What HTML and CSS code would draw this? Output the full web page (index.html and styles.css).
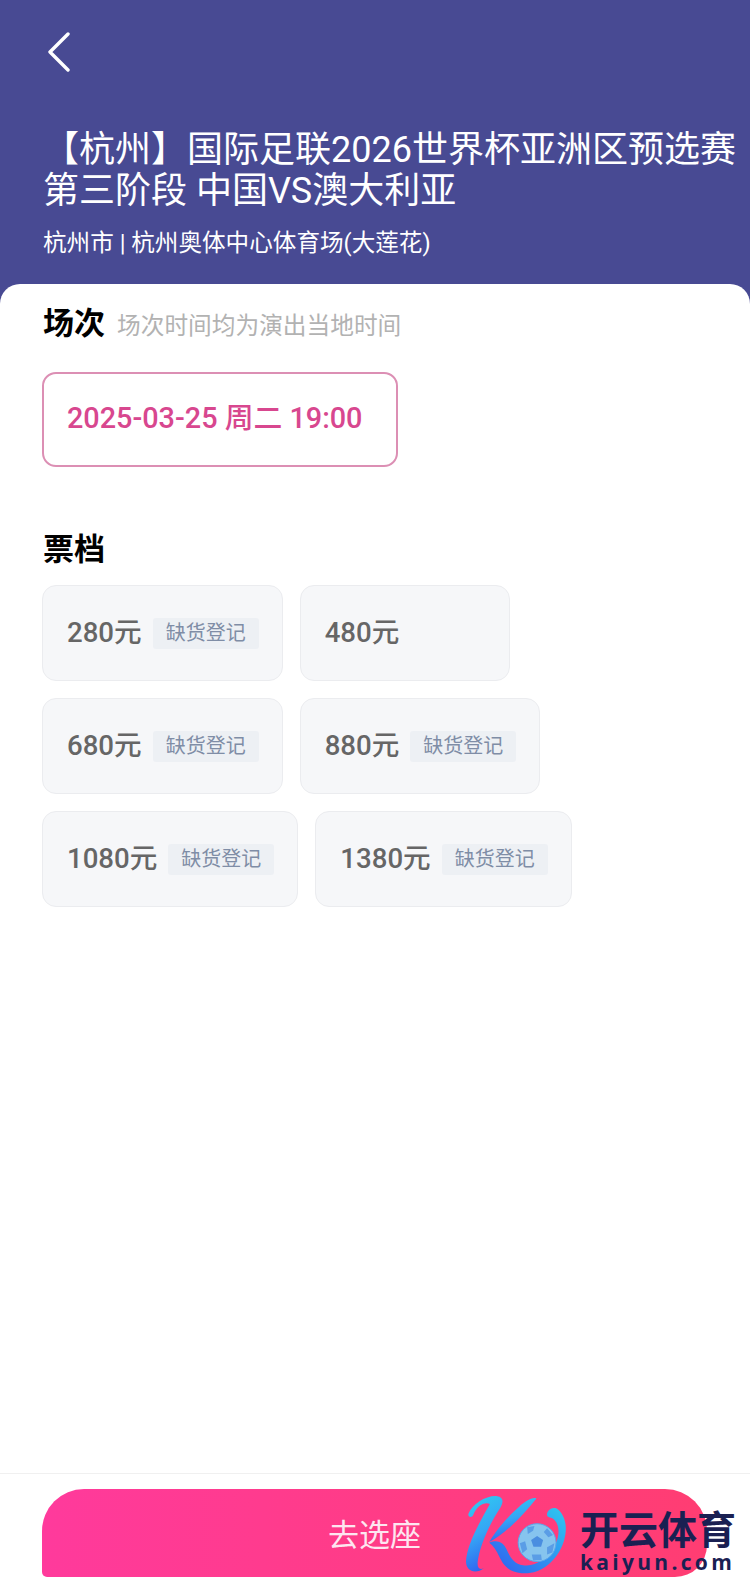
FILE: index.html
```html
<!DOCTYPE html>
<html lang="zh-CN">
<head>
    <meta charset="UTF-8">
    <meta name="viewport" content="width=device-width, initial-scale=1.0">
    <title>选座购票</title>
    <link rel="stylesheet" href="styles.css">
</head>
<body>
    <div class="page">
        <header class="event-header">
            <div class="back-button">
                <svg width="24" height="40" viewBox="0 0 24 40" fill="none" stroke="#fff" stroke-width="3.4" stroke-linecap="round" stroke-linejoin="round">
                    <path d="M21 2 L3 20 L21 38"/>
                </svg>
            </div>
            <h1 class="event-title">【杭州】国际足联2026世界杯亚洲区预选赛<br>第三阶段 中国VS澳大利亚</h1>
            <p class="event-venue">杭州市 | 杭州奥体中心体育场(大莲花)</p>
        </header>

        <main class="sheet">
            <div class="section-head">
                <h2 class="section-title">场次</h2>
                <span class="section-hint">场次时间均为演出当地时间</span>
            </div>
            <div class="session-box"><span class="session-text">2025-03-25 周二 19:00</span></div>

            <h2 class="section-title ticket-title">票档</h2>
            <div class="ticket-row">
                <div class="ticket"><span class="price">280元</span><span class="tag">缺货登记</span></div>
                <div class="ticket ticket-plain"><span class="price">480元</span></div>
            </div>
            <div class="ticket-row">
                <div class="ticket"><span class="price">680元</span><span class="tag">缺货登记</span></div>
                <div class="ticket"><span class="price">880元</span><span class="tag">缺货登记</span></div>
            </div>
            <div class="ticket-row">
                <div class="ticket"><span class="price">1080元</span><span class="tag">缺货登记</span></div>
                <div class="ticket"><span class="price">1380元</span><span class="tag">缺货登记</span></div>
            </div>
        </main>

        <footer class="footer">
            <div class="buy-button">去选座</div>
        </footer>
    </div>

    <div class="watermark">
        <svg class="watermark-logo" width="103" height="80" viewBox="75 105 310 240">
            <defs>
                <linearGradient id="kGrad" x1="0" y1="0" x2="0.3" y2="1">
                    <stop offset="0" stop-color="#2fd0f0"/>
                    <stop offset="0.55" stop-color="#35a6f5"/>
                    <stop offset="1" stop-color="#3066f0"/>
                </linearGradient>
                <linearGradient id="swooshGrad" x1="1" y1="0" x2="0" y2="1">
                    <stop offset="0" stop-color="#2fc8f0"/>
                    <stop offset="1" stop-color="#2f5cf0"/>
                </linearGradient>
            </defs>
            <path fill="url(#kGrad)" d="M85 162 C98 130 140 105 172 108 C192 110 192 128 178 148 C150 190 118 260 113 308 C112 325 120 332 132 324 C112 342 78 338 78 305 C80 250 128 172 150 132 C134 124 110 138 100 164 C96 174 84 172 85 162 Z"/>
            <path fill="url(#kGrad)" d="M290 115 C278 110 258 122 238 140 C208 166 172 205 148 246 C188 226 232 186 290 115 Z"/>
            <path fill="url(#swooshGrad)" d="M148 248 C172 238 190 246 200 268 C210 290 222 312 250 316 C300 322 350 275 356 222 C359 195 345 172 330 172 C322 172 318 162 326 152 C332 144 345 140 355 148 C378 168 385 205 372 245 C352 305 300 345 245 340 C205 336 190 315 178 290 C170 272 160 256 148 248 Z"/>
            <circle cx="292" cy="248" r="57" fill="#86c4ee" stroke="#5ba4ea" stroke-width="3"/>
            <polygon fill="#4a8ee0" points="292,228 310,240 304,260 281,260 274,240"/>
            <polygon fill="#5a9de6" points="262,202 284,198 280,212 264,222"/>
            <polygon fill="#5a9de6" points="322,205 340,225 326,232 312,216"/>
            <polygon fill="#5a9de6" points="240,250 256,244 262,268 248,280"/>
            <polygon fill="#5a9de6" points="322,262 344,250 338,278 322,284"/>
            <polygon fill="#5a9de6" points="276,284 304,284 306,300 280,302"/>
        </svg>
        <div class="watermark-text">
            <div class="watermark-name">开云体育</div>
            <div class="watermark-url">kaiyun.com</div>
        </div>
    </div>
</body>
</html>
```

FILE: styles.css
```css
* {
    box-sizing: border-box;
}
body {
    font-family: Roboto, "Noto Sans CJK SC", sans-serif;
    background-color: #fff;
    margin: 0;
    padding: 0;
}
h1, h2, p {
    margin: 0;
}
.page {
    width: 750px;
    height: 1594px;
    display: flex;
    flex-direction: column;
    background-color: #484a93;
    position: relative;
}
.event-header {
    height: 284px;
    padding: 32px 0 0 43px;
    color: #fff;
    flex-shrink: 0;
}
.back-button {
    height: 40px;
    margin-left: 4px;
}
.event-title {
    margin-top: 58px;
    font-size: 36px;
    font-weight: 400;
    line-height: 41px;
    white-space: nowrap;
}
.event-venue {
    margin-top: 16px;
    font-size: 23.6px;
    line-height: 30px;
}
.sheet {
    flex: 1;
    background-color: #fff;
    border-radius: 20px 20px 0 0;
    padding: 16px 0 0 42px;
}
.section-head {
    display: flex;
    align-items: flex-start;
    gap: 12px;
    height: 44px;
}
.section-head .section-title {
    margin-top: 2px;
}
.section-title {
    font-size: 31px;
    font-weight: 700;
    color: #000;
    line-height: 44px;
    padding-left: 1px;
}
.section-hint {
    font-size: 23.7px;
    line-height: 44px;
    color: #b2b2b2;
    margin-top: 4px;
}
.session-box {
    width: 356px;
    height: 95px;
    margin-top: 28px;
    padding: 0 0 8px 23px;
    display: flex;
    align-items: center;
    background-color: #fff;
    border: 2px solid #dc8fb4;
    border-radius: 14px;
}
.session-text {
    font-size: 28.8px;
    font-weight: 500;
    color: #d8478f;
    white-space: nowrap;
}
.ticket-title {
    margin-top: 61px;
}
.ticket-row {
    display: flex;
    gap: 17px;
    margin-top: 17px;
}
.ticket-title + .ticket-row {
    margin-top: 13px;
}
.ticket {
    height: 96px;
    padding: 0 23px 0 24px;
    display: flex;
    align-items: center;
    gap: 11px;
    background-color: #f6f7f9;
    border: 1px solid #ebecef;
    border-radius: 14px;
}
.ticket-plain {
    width: 210px;
}
.price {
    font-size: 27.6px;
    font-weight: 500;
    color: #666;
    padding-bottom: 7px;
}
.tag {
    height: 31px;
    padding: 0 13px 4px;
    display: flex;
    align-items: center;
    font-size: 20px;
    color: #7f8da6;
    background-color: #edf0f4;
    border-radius: 3px;
}
.footer {
    height: 121px;
    padding: 15px 43px 0 42px;
    background-color: #fff;
    border-top: 1px solid #f0f0f0;
    flex-shrink: 0;
}
.buy-button {
    height: 88px;
    padding-bottom: 2px;
    display: flex;
    align-items: center;
    justify-content: center;
    font-size: 31px;
    color: #fde6f0;
    background: linear-gradient(90deg, #ff3a9c, #ff3d72);
    border-radius: 42px 42px 32px 5px;
}
.watermark {
    position: absolute;
    left: 465px;
    top: 1495px;
    display: flex;
    color: #1a2052;
}
.watermark-text {
    margin-left: 12px;
}
.watermark-name {
    font-family: "Noto Sans CJK SC", sans-serif;
    font-size: 39px;
    font-weight: 700;
    line-height: 38px;
    margin-top: 13px;
    white-space: nowrap;
}
.watermark-url {
    font-family: "Open Sans", sans-serif;
    font-size: 21px;
    font-weight: 700;
    line-height: 24px;
    letter-spacing: 3.3px;
    margin-top: 4px;
}
```
